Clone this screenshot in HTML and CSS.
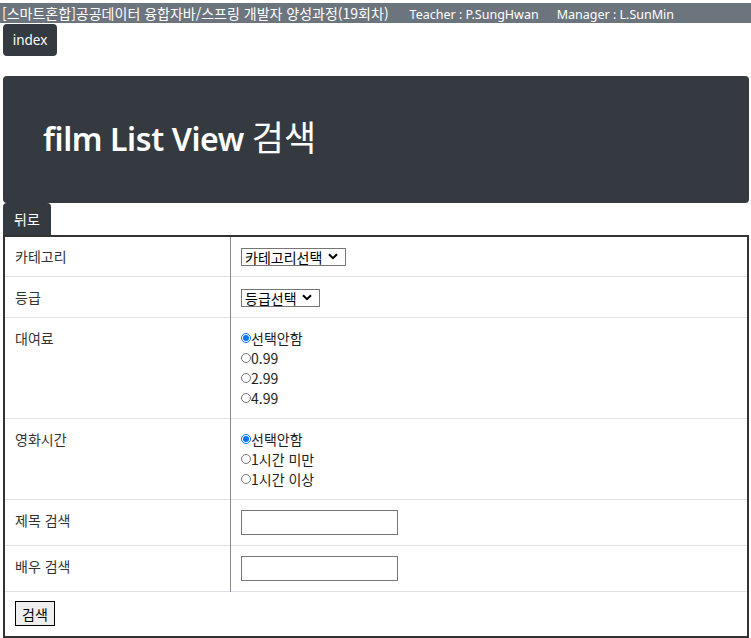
FILE: index.html
```html
<!DOCTYPE html>
<html lang="ko">
<head>
<meta charset="utf-8">
<title>film List View 검색</title>
<link rel="stylesheet" href="styles.css">
</head>
<body>
<div class="topbar"><span class="ko">[스마트혼합]공공데이터 융합자바/스프링 개발자 양성과정(19회차)</span><span class="gap"></span><span class="en">Teacher : P.SungHwan</span><span class="gap"></span><span class="en">Manager : L.SunMin</span></div>
<div class="wrap">
  <a class="btn btn-index" href="#">index</a>
  <div class="jumbo"><h1 class="title">film List View <span class="title-ko">검색</span></h1></div>
  <a class="btn btn-back" href="#">뒤로</a>
  <table class="form-table">
    <tr>
      <td class="lab first">카테고리</td>
      <td class="val first">
        <span class="sel-wrap">
          <select class="sel"><option>카테고리선택</option></select>
          <svg class="chev" width="10" height="7" viewBox="0 0 10 7"><path d="M1 1.2 L5 5.2 L9 1.2" fill="none" stroke="#000" stroke-width="2"/></svg>
        </span>
      </td>
    </tr>
    <tr>
      <td class="lab">등급</td>
      <td class="val">
        <span class="sel-wrap">
          <select class="sel"><option>등급선택</option></select>
          <svg class="chev" width="10" height="7" viewBox="0 0 10 7"><path d="M1 1.2 L5 5.2 L9 1.2" fill="none" stroke="#000" stroke-width="2"/></svg>
        </span>
      </td>
    </tr>
    <tr>
      <td class="lab">대여료</td>
      <td class="val">
        <label class="opt"><input type="radio" name="rate" checked>선택안함</label>
        <label class="opt"><input type="radio" name="rate">0.99</label>
        <label class="opt"><input type="radio" name="rate">2.99</label>
        <label class="opt"><input type="radio" name="rate">4.99</label>
      </td>
    </tr>
    <tr>
      <td class="lab">영화시간</td>
      <td class="val">
        <label class="opt"><input type="radio" name="len" checked>선택안함</label>
        <label class="opt"><input type="radio" name="len">1시간 미만</label>
        <label class="opt"><input type="radio" name="len">1시간 이상</label>
      </td>
    </tr>
    <tr>
      <td class="lab">제목 검색</td>
      <td class="val"><input class="txt" type="text"></td>
    </tr>
    <tr>
      <td class="lab">배우 검색</td>
      <td class="val"><input class="txt" type="text"></td>
    </tr>
    <tr>
      <td class="last" colspan="2"><button class="submit" type="button">검색</button></td>
    </tr>
  </table>
</div>
</body>
</html>
```
FILE: styles.css
```css
html, body {
  margin: 0;
  padding: 0;
  background: #fff;
}
body {
  font-family: "Noto Sans", "Noto Sans CJK KR", sans-serif;
  color: #212529;
  padding-top: 3px;
}
.topbar {
  background: #6c757d;
  color: #fff;
  height: 20px;
  line-height: 20px;
  padding-left: 2px;
  white-space: nowrap;
  overflow: hidden;
}
.ko {
  font-family: "Noto Sans CJK KR", sans-serif;
  font-size: 14px;
}
.en {
  font-size: 12.5px;
}
.gap {
  display: inline-block;
  width: 21px;
}
.gap + .en + .gap {
  width: 18px;
}
.wrap {
  padding: 1px 2px 0 3px;
}
.btn {
  display: flex;
  align-items: center;
  justify-content: center;
  background: #343a40;
  color: #fff;
  text-decoration: none;
  font-size: 14px;
  font-family: "Noto Sans CJK KR", sans-serif;
  height: 32px;
  border-radius: 4px;
}
.btn-index {
  width: 54px;
  font-family: "Noto Sans", sans-serif;
  font-size: 13.5px;
}
.jumbo {
  margin-top: 20px;
  background: #343a40;
  border-radius: 4px;
  height: 127px;
  display: flex;
  align-items: center;
  padding-left: 40px;
}
.title {
  margin: 0;
  color: #fff;
  font-size: 32px;
  font-weight: 600;
  line-height: 1.2;
  padding-bottom: 5px;
  letter-spacing: -0.4px;
}
.title-ko {
  font-family: "Noto Sans CJK KR", sans-serif;
  font-weight: 400;
  font-size: 35px;
  letter-spacing: 0;
}
.btn-back {
  width: 48px;
  border-radius: 4px 4px 0 0;
}
.form-table {
  width: 100%;
  border-collapse: collapse;
  border: 2px solid #333;
  font-size: 14px;
}
.form-table td {
  padding: 10px 10px;
  line-height: 20px;
  vertical-align: top;
  border-top: 1px solid #dee2e6;
  font-family: "Noto Sans CJK KR", sans-serif;
}
.form-table tr:first-child td {
  border-top: none;
}
.form-table td.first {
  padding-top: 9px;
}
.lab {
  width: 205px;
  border-right: 1px solid #888;
  color: #333;
}
.val {
  color: #222;
}
.sel-wrap {
  position: relative;
  display: inline-block;
  vertical-align: top;
  margin-top: 2px;
}
.sel {
  display: block;
  appearance: none;
  -webkit-appearance: none;
  font-size: 14px;
  font-family: "Noto Sans CJK KR", sans-serif;
  height: 18px;
  line-height: 16px;
  padding: 0 22px 0 3px;
  margin: 0;
  border: 1px solid #767676;
  border-radius: 0;
  background: #fff;
  color: #000;
}
.chev {
  position: absolute;
  right: 8px;
  top: 5px;
  pointer-events: none;
}
.opt {
  display: flex;
  align-items: center;
  height: 20px;
}
.opt input {
  width: 10px;
  height: 10px;
  margin: 0;
}
.txt {
  display: block;
  width: 157px;
  height: 25px;
  box-sizing: border-box;
  padding: 1px;
  border: 1px solid #767676;
  margin: 0;
}
.submit {
  display: block;
  font-size: 14px;
  font-family: "Noto Sans CJK KR", sans-serif;
  height: 25px;
  padding: 0 6px;
  background: #efefef;
  border: 1px solid #000;
  margin: -1px 0 0 0;
}
```
